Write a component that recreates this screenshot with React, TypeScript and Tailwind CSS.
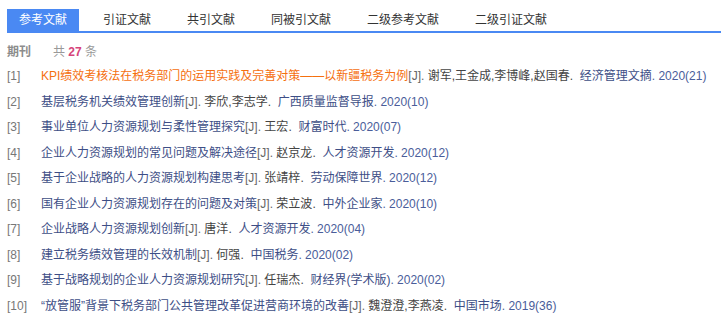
import React from "react";

type Row = {
  title: string;
  authors: string;
  journal: string;
  year: string;
  hot?: boolean;
};

const rows: Row[] = [
  { title: "KPI绩效考核法在税务部门的运用实践及完善对策——以新疆税务为例", authors: "谢军,王金成,李博峰,赵国春", journal: "经济管理文摘", year: "2020(21)", hot: true },
  { title: "基层税务机关绩效管理创新", authors: "李欣,李志学", journal: "广西质量监督导报", year: "2020(10)" },
  { title: "事业单位人力资源规划与柔性管理探究", authors: "王宏", journal: "财富时代", year: "2020(07)" },
  { title: "企业人力资源规划的常见问题及解决途径", authors: "赵京龙", journal: "人才资源开发", year: "2020(12)" },
  { title: "基于企业战略的人力资源规划构建思考", authors: "张靖梓", journal: "劳动保障世界", year: "2020(12)" },
  { title: "国有企业人力资源规划存在的问题及对策", authors: "荣立波", journal: "中外企业家", year: "2020(10)" },
  { title: "企业战略人力资源规划创新", authors: "唐洋", journal: "人才资源开发", year: "2020(04)" },
  { title: "建立税务绩效管理的长效机制", authors: "何强", journal: "中国税务", year: "2020(02)" },
  { title: "基于战略规划的企业人力资源规划研究", authors: "任瑞杰", journal: "财经界(学术版)", year: "2020(02)" },
  { title: "“放管服”背景下税务部门公共管理改革促进营商环境的改善", authors: "魏澄澄,李燕凌", journal: "中国市场", year: "2019(36)" },
];

const tabs = ["参考文献", "引证文献", "共引文献", "同被引文献", "二级参考文献", "二级引证文献"];

export default function App() {
  return (
    <div
      className="w-[721px] h-[330px] bg-white overflow-hidden text-[12px]"
      style={{ fontFamily: '"Liberation Sans", "Noto Sans CJK SC", sans-serif' }}
    >
      <div className="pl-[7px] pt-[9px]">
        <div className="flex border-b-2 border-[#4a89f3]">
          {tabs.map((t, i) => (
            <div
              key={t}
              className={
                i === 0
                  ? "h-[22px] leading-[22px] px-3 mr-3 bg-[#4a89f3] text-white"
                  : "h-[22px] leading-[22px] px-3 mr-3 text-[#333333]"
              }
            >
              {t}
            </div>
          ))}
        </div>
        <div className="flex items-center h-[20px] mt-[9px] leading-[20px]">
          <span className="font-bold text-[#8c8c8c] w-[46px]">期刊</span>
          <span className="text-[#999999]">
            共 <span className="font-bold text-[#d6447a]">27</span> 条
          </span>
        </div>
        <ul className="mt-[2px]">
          {rows.map((r, i) => (
            <li key={i} className="flex h-[25.5px] leading-[25.5px] whitespace-nowrap">
              <span className="w-[34px] text-[#777777]">[{i + 1}]</span>
              <span>
                <span className={r.hot ? "text-[#f5700f]" : "text-[#3d4e86]"}>{r.title}</span>
                <span className="text-[#666666]">[J]. </span>
                <span className="text-[#444444]">{r.authors}.{"\u00a0 "}</span>
                <span className="text-[#3d4e86]">{r.journal}</span>
                <span className="text-[#4a5d9a]">. {r.year}</span>
              </span>
            </li>
          ))}
        </ul>
      </div>
    </div>
  );
}
